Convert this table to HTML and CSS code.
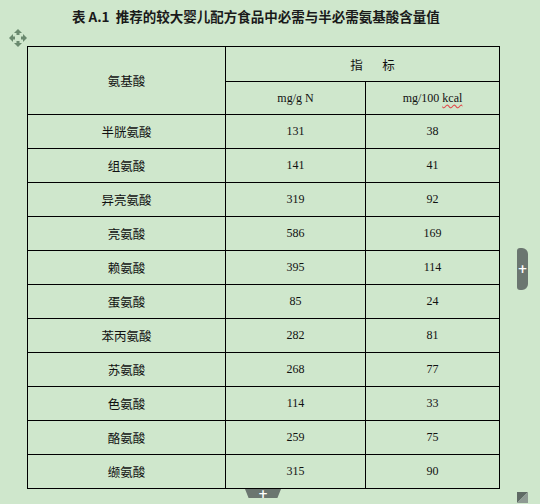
FILE: index.html
```html
<!DOCTYPE html>
<html>
<head>
<meta charset="utf-8">
<link rel="stylesheet" href="styles.css">
</head>
<body>
<div class="page">
  <h1 class="title">表 A.1&nbsp;&nbsp;推荐的较大婴儿配方食品中必需与半必需氨基酸含量值</h1>
  <div class="table-wrap">
    <svg class="move-handle" width="18" height="18" viewBox="0 0 18 18">
      <g fill="#6a8a6e">
        <polygon points="9,0 13,4 10.5,4 10.5,6 7.5,6 7.5,4 5,4"/>
        <polygon points="9,18 13,14 10.5,14 10.5,12 7.5,12 7.5,14 5,14"/>
        <polygon points="0,9 4,5 4,7.5 6,7.5 6,10.5 4,10.5 4,13"/>
        <polygon points="18,9 14,5 14,7.5 12,7.5 12,10.5 14,10.5 14,13"/>
      </g>
    </svg>
    <table class="data">
      <colgroup>
        <col class="c1"><col class="c2"><col class="c3">
      </colgroup>
      <thead>
        <tr class="h1">
          <th rowspan="2" class="cjk">氨基酸</th>
          <th colspan="2" class="cjk idx">指&nbsp;&nbsp;&nbsp;&nbsp;&nbsp;&nbsp;&nbsp;标</th>
        </tr>
        <tr class="h2">
          <th class="num">mg/g N</th>
          <th class="num">mg/100 <span class="spell">kcal</span></th>
        </tr>
      </thead>
      <tbody>
        <tr><td class="cjk">半胱氨酸</td><td class="num">131</td><td class="num">38</td></tr>
        <tr><td class="cjk">组氨酸</td><td class="num">141</td><td class="num">41</td></tr>
        <tr><td class="cjk">异亮氨酸</td><td class="num">319</td><td class="num">92</td></tr>
        <tr><td class="cjk">亮氨酸</td><td class="num">586</td><td class="num">169</td></tr>
        <tr><td class="cjk">赖氨酸</td><td class="num">395</td><td class="num">114</td></tr>
        <tr><td class="cjk">蛋氨酸</td><td class="num">85</td><td class="num">24</td></tr>
        <tr><td class="cjk">苯丙氨酸</td><td class="num">282</td><td class="num">81</td></tr>
        <tr><td class="cjk">苏氨酸</td><td class="num">268</td><td class="num">77</td></tr>
        <tr><td class="cjk">色氨酸</td><td class="num">114</td><td class="num">33</td></tr>
        <tr><td class="cjk">酪氨酸</td><td class="num">259</td><td class="num">75</td></tr>
        <tr><td class="cjk">缬氨酸</td><td class="num">315</td><td class="num">90</td></tr>
      </tbody>
    </table>
    <div class="tab-right"><span>+</span></div>
    <div class="tab-bottom"><span>+</span></div>
    <svg class="resize" width="11" height="11" viewBox="0 0 11 11">
      <polygon points="0,0 11,0 0,11" fill="#5f6a64"/>
      <polygon points="11,0 11,11 0,11" fill="#8e9a93"/>
    </svg>
  </div>
</div>
</body>
</html>
```

FILE: styles.css
```css
html, body {
  margin: 0;
  padding: 0;
  background: #cfe7cc;
}
.page {
  width: 540px;
  height: 504px;
  overflow: hidden;
  background: #cfe7cc;
  font-family: "Noto Sans CJK SC", "Noto Sans", sans-serif;
  color: #111;
}
.title {
  margin: 0;
  padding: 7px 0 0 72px;
  height: 23px;
  font-size: 13.5px;
  line-height: 18px;
  font-weight: bold;
  white-space: nowrap;
  color: #1a1a1a;
}
.table-wrap {
  position: relative;
  margin-top: 16px;
  margin-left: 27px;
  width: 472px;
}
.move-handle {
  position: absolute;
  left: -18px;
  top: -17px;
}
table.data {
  border-collapse: collapse;
  table-layout: fixed;
  width: 472px;
}
col.c1 { width: 198px; }
col.c2 { width: 140px; }
col.c3 { width: 134px; }
.data th, .data td {
  border: 1px solid #000;
  text-align: center;
  vertical-align: middle;
  padding: 0;
  font-weight: normal;
}
.h1 th { height: 34px; }
.h2 th { height: 32px; }
.data tbody td { height: 33px; }
.cjk {
  font-family: "Noto Sans CJK SC", sans-serif;
  font-size: 12.5px;
}
.idx { padding-left: 20px !important; }
.num {
  font-family: "Liberation Serif", serif;
  font-size: 12px;
}
.spell {
  text-decoration: underline wavy #e05050;
  text-underline-offset: 2px;
}
.tab-right {
  position: absolute;
  left: 490px;
  top: 202px;
  width: 11px;
  height: 42px;
  background: #6b7670;
  border-radius: 3px 6px 6px 3px;
  display: flex;
  align-items: center;
  justify-content: center;
}
.tab-right span, .tab-bottom span {
  color: #fff;
  font-family: "DejaVu Sans", sans-serif;
  font-weight: bold;
  font-size: 12px;
  line-height: 10px;
}
.tab-bottom {
  position: absolute;
  left: 218px;
  top: 443px;
  width: 36px;
  height: 9px;
  background: #6b7670;
  clip-path: polygon(0 0, 100% 0, 90% 100%, 10% 100%);
  display: flex;
  align-items: center;
  justify-content: center;
}
.resize {
  position: absolute;
  left: 490px;
  top: 446px;
}
```
